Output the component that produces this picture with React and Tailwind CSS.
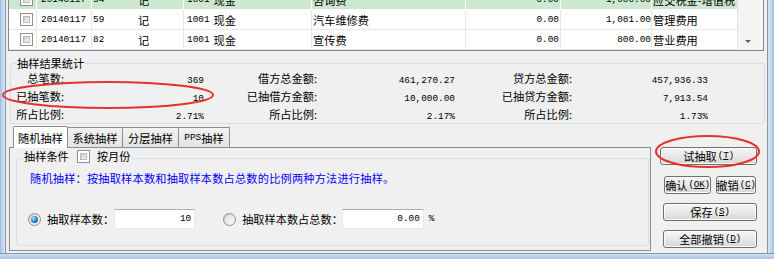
import React from "react";

const CJKF = "font-['Noto_Sans_CJK_SC','Noto_Sans',sans-serif] text-[11.2px]";
const MONOF = "font-['Liberation_Mono',monospace] text-[9.4px]";

function C({ children, className = "" }) {
  return <span className={`${CJKF} leading-[14px] ${className}`}>{children}</span>;
}
function M({ children, className = "" }) {
  return <span className={`${MONOF} leading-[14px] ${className}`}>{children}</span>;
}

function Check() {
  return (
    <span className="inline-flex w-[13px] h-[13px] border border-[#8f8f8f] bg-white p-[2px]">
      <span className="block w-full h-full bg-linear-to-br from-[#c9ccd1] to-[#f4f4f4] border border-[#b8bcc2]" />
    </span>
  );
}

function Radio({ checked }) {
  return (
    <span className="inline-flex w-[13px] h-[13px] rounded-full border border-[#8e8f8f] bg-linear-to-br from-[#cfd0d2] to-[#fbfbfb] items-center justify-center">
      {checked ? (
        <span className="w-[7px] h-[7px] rounded-full bg-[radial-gradient(circle_at_35%_35%,#a6e4ff,#1f7bd0_55%,#0d4a94)]" />
      ) : (
        <span className="w-[7px] h-[7px] rounded-full bg-linear-to-br from-[#e4e4e4] to-[#f8f8f8]" />
      )}
    </span>
  );
}

function Btn({ label, k, className = "" }) {
  return (
    <div
      className={`flex items-center justify-center whitespace-nowrap h-[18px] rounded-[3px] border border-[#707070] bg-linear-to-b from-[#f6f6f6] via-[#e9e9e9] to-[#d6d6d6] shadow-[inset_0_0_0_1px_#fcfcfc] ${className}`}
    >
      <C>{label}</C>
      <M className="ml-[1px] tracking-[-0.3px]">
        (<span className="underline">{k}</span>)
      </M>
    </div>
  );
}

function Row({ green, no, summary, debit, credit, account }) {
  const line = green ? "border-white" : "border-[#e6e6e6]";
  const bg = green ? "bg-[#cce8cf]" : "bg-white";
  return (
    <div className={`flex h-[20px] border-b ${line} ${bg}`}>
      <div className={`w-[28px] shrink-0 border-r ${line} flex items-center justify-center pl-[8px]`}>
        <Check />
      </div>
      <div className={`w-[55px] shrink-0 border-r ${line} flex items-center pl-[4px]`}>
        <M>20140117</M>
      </div>
      <div className="w-[45px] shrink-0 flex items-center pl-[1px]">
        <M>{no}</M>
      </div>
      <div className={`w-[47px] shrink-0 border-r ${line} flex items-center pl-[1px]`}>
        <C>记</C>
      </div>
      <div className={`w-[128px] shrink-0 border-r ${line} flex items-center pl-[3px]`}>
        <M>1001</M>
        <C className="ml-[4px]">现金</C>
      </div>
      <div className={`w-[154px] shrink-0 border-r ${line} flex items-center pl-[1px]`}>
        <C>{summary}</C>
      </div>
      <div className={`w-[95px] shrink-0 border-r ${line} flex items-center justify-end pr-[1px]`}>
        <M>{debit}</M>
      </div>
      <div className={`w-[91px] shrink-0 border-r ${line} flex items-center justify-end`}>
        <M>{credit}</M>
      </div>
      <div className="w-[85px] shrink-0 flex items-center pl-[1px] whitespace-nowrap overflow-visible">
        <C>{account}</C>
      </div>
    </div>
  );
}

function StatRow({ h, l1, v1, l2, v2, l3, v3 }) {
  return (
    <div className={`flex items-center ${h}`}>
      <div className="w-[53px] text-right"><C>{l1}</C></div>
      <div className="w-[140px] text-right"><M>{v1}</M></div>
      <div className="w-[113px] text-right"><C>{l2}</C></div>
      <div className="w-[138px] text-right"><M>{v2}</M></div>
      <div className="w-[117px] text-right"><C>{l3}</C></div>
      <div className="w-[136px] text-right"><M>{v3}</M></div>
    </div>
  );
}

const tabOff = "h-[20px] border border-l-0 border-b-0 border-[#898c95] bg-linear-to-b from-[#f2f2f2] to-[#e3e3e3] flex items-center justify-center";

export default function App() {
  return (
    <div className="relative w-[774px] h-[259px] overflow-hidden bg-[#f0f0f0] text-black flex flex-col">
      <div className="flex h-[253px]">
        {/* left window frame */}
        <div className="w-[5px] h-full bg-linear-to-r from-[#9fbce0] via-[#c3d8ef] to-[#d6e4f4]" />
        <div className="w-[1px] h-full bg-[#8796ab]" />

        {/* main */}
        <div className="w-[761px] h-full flex flex-col bg-[#f0f0f0]">
          {/* grid */}
          <div className="ml-[2px] mr-[3px] h-[51px] border-x border-b border-[#828790] overflow-hidden flex bg-white">
            <div className="w-[728px] -mt-[10px] flex flex-col">
              <Row green no="54" summary="咨询费" debit="0.00" credit="1,000.00" account="应交税金-增值税" />
              <Row no="59" summary="汽车维修费" debit="0.00" credit="1,081.00" account="管理费用" />
              <Row no="82" summary="宣传费" debit="0.00" credit="800.00" account="营业费用" />
            </div>
            <div className="flex-1 bg-[#f4f4f4] border-l border-[#e3e3e3] relative">
              <div className="absolute left-[7px] top-[40px] w-0 h-0 border-l-[3px] border-r-[3px] border-t-[3px] border-l-transparent border-r-transparent border-t-[#606060]" />
            </div>
          </div>

          {/* stats group */}
          <fieldset className="ml-[4px] mr-[2px] mt-[7px] border border-[#d5dfe5] rounded-[3px] h-[66px]">
            <legend className={`${CJKF} leading-[10px] ml-[5px] px-[1px]`}>抽样结果统计</legend>
            <div className="-mt-[1px]">
              <StatRow h="h-[19px]" l1="总笔数:" v1="369" l2="借方总金额:" v2="461,270.27" l3="贷方总金额:" v3="457,936.33" />
              <StatRow h="h-[18px]" l1="已抽笔数:" v1="10" l2="已抽借方金额:" v2="10,000.00" l3="已抽贷方金额:" v3="7,913.54" />
              <StatRow h="h-[18px]" l1="所占比例:" v1="2.71%" l2="所占比例:" v2="2.17%" l3="所占比例:" v3="1.73%" />
            </div>
          </fieldset>

          {/* lower area */}
          <div className="flex mt-[2px]">
            <div className="ml-[3px] w-[642px] flex flex-col">
              <div className="flex items-end h-[21px] pl-[4px]">
                <div className="relative z-10 w-[55px] h-[22px] -mb-[1px] border border-b-0 border-[#898c95] bg-white rounded-t-[2px] flex items-center justify-center">
                  <C>随机抽样</C>
                </div>
                <div className={`w-[55px] ${tabOff}`}>
                  <C>系统抽样</C>
                </div>
                <div className={`w-[56px] ${tabOff}`}>
                  <C>分层抽样</C>
                </div>
                <div className={`w-[51px] ${tabOff}`}>
                  <M>PPS</M>
                  <C>抽样</C>
                </div>
              </div>
              <div className="h-[104px] border border-[#898c95] bg-[#f0f0f0] pl-[6px] pr-[1px] pt-[1px]">
                <fieldset className="border border-[#d5dfe5] rounded-[3px] h-[97px]">
                  <legend className="ml-[6px] px-[1px] pb-[4px] flex items-center">
                    <C>抽样条件</C>
                    <span className="ml-[8px] flex"><Check /></span>
                    <C className="ml-[7px]">按月份</C>
                  </legend>
                  <div className="-mt-[2px] pl-[13px]">
                    <C className="text-[#0000ff] tracking-[0.2px]">随机抽样：按抽取样本数和抽取样本数占总数的比例两种方法进行抽样。</C>
                  </div>
                  <div className="mt-[20px] flex items-center h-[20px] pl-[11px]">
                    <Radio checked />
                    <C className="ml-[6px]">抽取样本数：</C>
                    <div className="w-[81px] h-[20px] bg-white border border-[#e3e9ef] border-t-[#abadb3] flex items-center justify-end pr-[3px]">
                      <M>10</M>
                    </div>
                    <span className="ml-[28px] flex"><Radio /></span>
                    <C className="ml-[6px]">抽取样本数占总数：</C>
                    <div className="-ml-[1px] w-[82px] h-[20px] bg-white border border-[#e3e9ef] border-t-[#abadb3] flex items-center justify-end pr-[3px]">
                      <M>0.00</M>
                    </div>
                    <M className="ml-[5px]">%</M>
                  </div>
                </fieldset>
              </div>
            </div>

            {/* buttons */}
            <div className="flex-1 flex flex-col pt-[21px] pr-[10px]">
              <Btn label="试抽取" k="T" className="ml-[9px] w-[97px]" />
              <div className="flex mt-[11px] ml-[13px]">
                <Btn label="确认" k="OK" className="w-[47px]" />
                <Btn label="撤销" k="C" className="ml-[5px] w-[40px]" />
              </div>
              <Btn label="保存" k="S" className="mt-[9px] ml-[12px] w-[94px]" />
              <Btn label="全部撤销" k="D" className="mt-[9px] ml-[12px] w-[94px]" />
            </div>
          </div>
        </div>

        {/* right window frame */}
        <div className="w-[1px] h-full bg-[#8796ab]" />
        <div className="flex-1 h-full bg-linear-to-r from-[#d6e4f4] via-[#c3d8ef] to-[#9fbce0]" />
      </div>
      {/* bottom frame */}
      <div className="h-[6px] border-t border-[#8796ab] bg-linear-to-b from-[#d0e0f2] to-[#a8c3e4]" />

      {/* red annotation ellipses */}
      <svg className="absolute left-0 top-0 pointer-events-none" width="774" height="259">
        <ellipse cx="108" cy="95" rx="105" ry="13" fill="none" stroke="#e5322d" strokeWidth="2" />
        <ellipse cx="707.5" cy="151.5" rx="51.5" ry="15.5" fill="none" stroke="#e5322d" strokeWidth="2" />
      </svg>
    </div>
  );
}
